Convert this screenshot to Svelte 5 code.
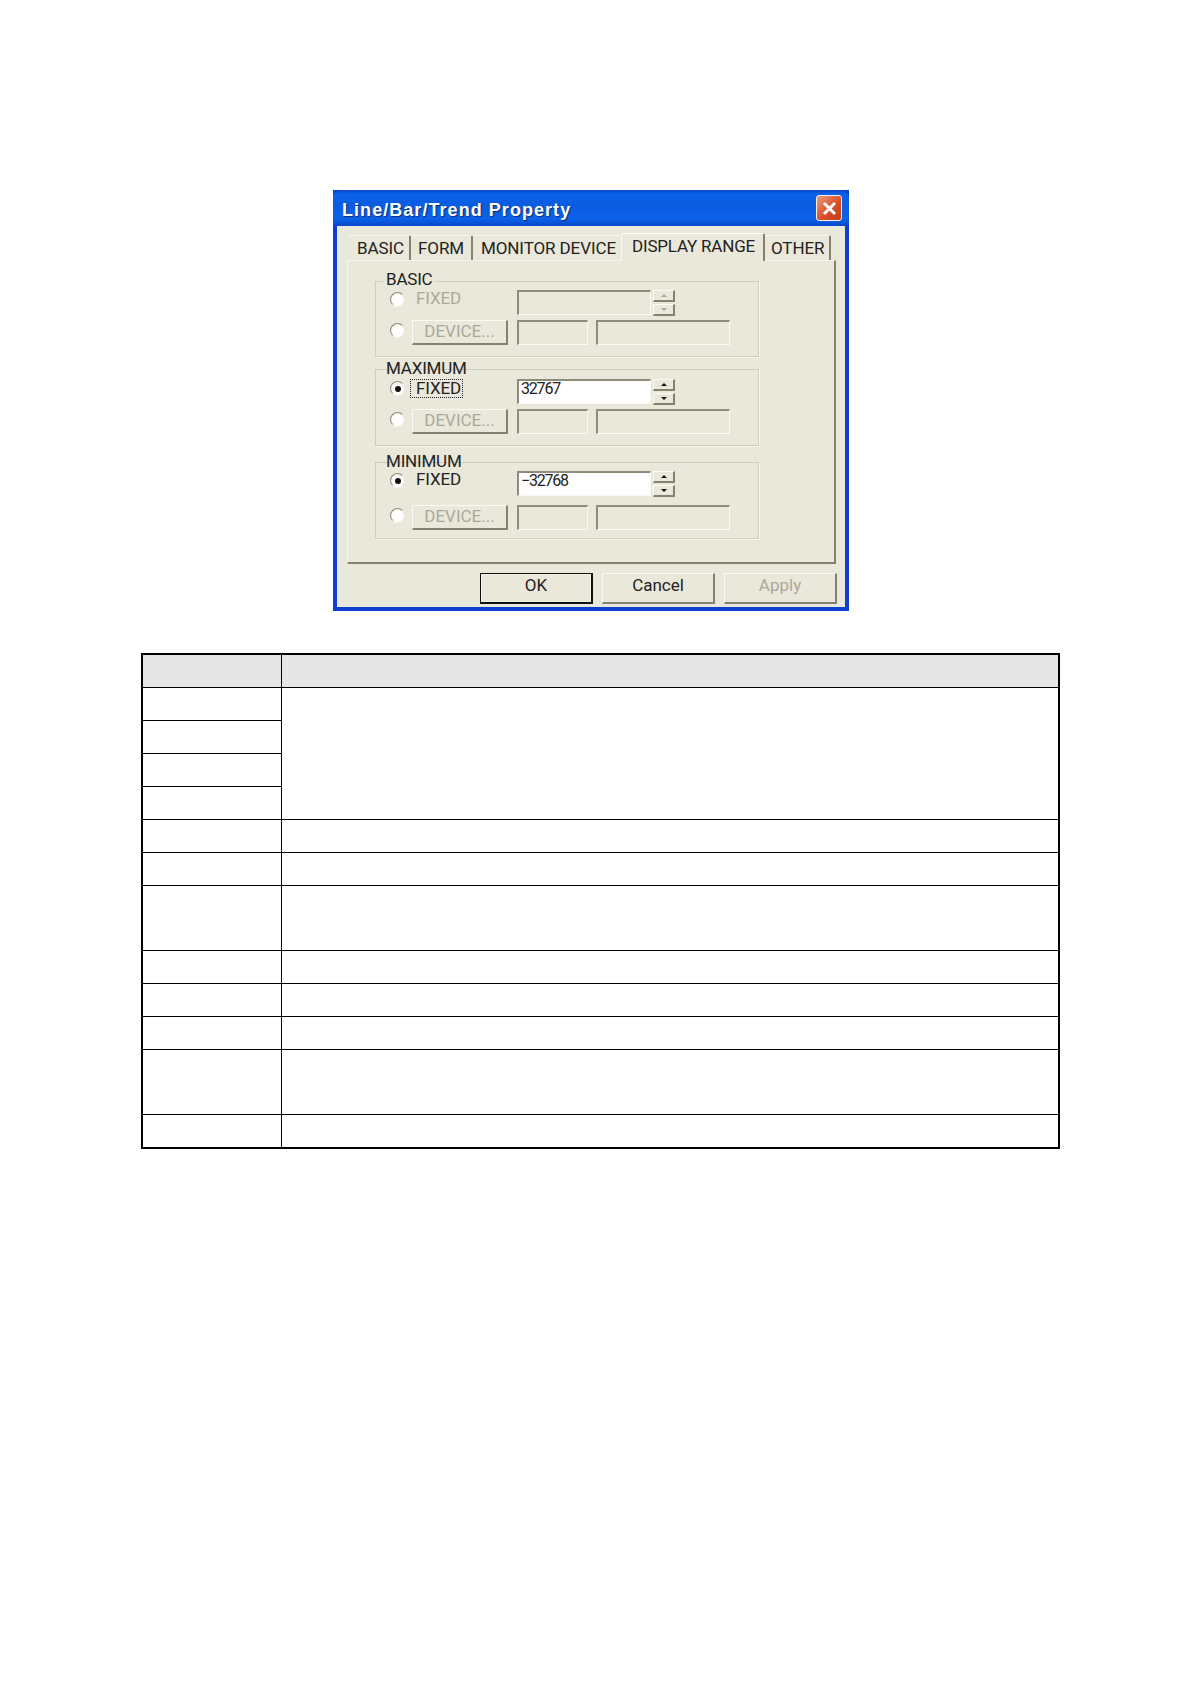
<script>
  const tabs = [
    { label: "BASIC", w: 64, pad: 10 },
    { label: "FORM", w: 62, pad: 7 },
    { label: "MONITOR DEVICE", w: 148, pad: 8, plain: true },
    { label: "DISPLAY RANGE", w: 144, pad: 10, active: true },
    { label: "OTHER", w: 66, pad: 6 }
  ];

  const groups = [
    { title: "BASIC", cls: "g-basic", value: "", off: true },
    { title: "MAXIMUM", cls: "g-max", value: "32767", focus: true },
    { title: "MINIMUM", cls: "g-min", value: "−32768" }
  ];

  // row heights of the (empty) table under the dialog
  const rows = [
    { h: 33, span: 4 }, { h: 33, skip: true }, { h: 33, skip: true }, { h: 33, skip: true },
    { h: 33 }, { h: 33 }, { h: 65 }, { h: 33 }, { h: 33 }, { h: 33 }, { h: 65 }, { h: 33 }
  ];
</script>

<div class="page">
  <div class="dialog">
    <div class="titlebar">
      <span class="title">Line/Bar/Trend Property</span>
      <span class="close">
        <svg width="17" height="17" viewBox="0 0 17 17">
          <path d="M3 3 L14 14 M14 3 L3 14" stroke="#fff" stroke-width="3" fill="none" />
        </svg>
      </span>
    </div>

    <div class="tabs">
      {#each tabs as t}
        <div class="tab" class:active={t.active} class:plain={t.plain} style="width:{t.w}px;padding-left:{t.pad}px">{t.label}</div>
      {/each}
    </div>

    <div class="panel">
      {#each groups as g}
        <div class="group {g.cls}">
          <span class="legend">{g.title}</span>
          <div class="row first">
            <span class="radio" class:off={g.off} class:on={!g.off}></span>
            <div class="fixed-cell">
              <span class="fixed" class:off={g.off} class:focus={g.focus}>FIXED</span>
            </div>
            <input class="field f-main" class:white={!g.off} disabled value={g.value} />
            <div class="spin" class:off={g.off}>
              <span class="sb"><i class="up"></i></span>
              <span class="sb"><i class="down"></i></span>
            </div>
          </div>
          <div class="row second">
            <span class="radio off"></span>
            <button class="btn device" disabled>DEVICE...</button>
            <input class="field f-a" disabled />
            <input class="field f-b" disabled />
          </div>
        </div>
      {/each}
    </div>

    <div class="actions">
      <button class="btn act ok">OK</button>
      <button class="btn act cancel">Cancel</button>
      <button class="btn act apply" disabled>Apply</button>
    </div>
  </div>

  <table class="grid">
    <colgroup>
      <col class="c1" />
      <col />
    </colgroup>
    <thead>
      <tr><th></th><th></th></tr>
    </thead>
    <tbody>
      {#each rows as r}
        <tr style="height:{r.h}px">
          <td></td>
          {#if !r.skip}
            <td rowspan={r.span || 1}></td>
          {/if}
        </tr>
      {/each}
    </tbody>
  </table>
</div>

<style>
  :global(body) {
    margin: 0;
    background: #fff;
  }

  .page {
    min-height: 1684px;
    padding-top: 190px;
    box-sizing: border-box;
    font-family: Roboto, "Liberation Sans", sans-serif;
    font-size: 17px;
    color: #222;
  }

  .dialog {
    width: 516px;
    height: 421px;
    margin-left: 333px;
    box-sizing: border-box;
    background: linear-gradient(#1a1a1a 0 12px, #eae8da 12px);
    border: 4px solid #0a3fd0;
    border-top: 0;
  }

  .titlebar {
    height: 36px;
    margin: 0 -4px;
    padding: 4px 7px 0 9px;
    box-sizing: border-box;
    display: flex;
    align-items: center;
    justify-content: space-between;
    border-radius: 7px 7px 0 0;
    background: linear-gradient(#0a46c4 0, #0a62ea 12%, #0a5ce0 45%, #0c62ea 80%, #0748c8 100%);
  }

  .title {
    color: #fff;
    font-family: "Liberation Sans", sans-serif;
    font-size: 18px;
    font-weight: bold;
    letter-spacing: 1.05px;
    text-shadow: 1px 1px 1px #0a2a80;
  }

  .close {
    width: 26px;
    height: 26px;
    margin-top: -4px;
    display: flex;
    align-items: center;
    justify-content: center;
    box-sizing: border-box;
    border: 1px solid #f4f0ea;
    border-radius: 3px;
    background: linear-gradient(135deg, #ee9c7c, #d8502a 55%, #c23c16);
  }

  .tabs {
    display: flex;
    align-items: flex-end;
    height: 34px;
    margin-left: 10px;
  }

  .tab {
    height: 25px;
    box-sizing: border-box;
    line-height: 24px;
    letter-spacing: -0.1px;
    white-space: nowrap;
    border-top: 1px solid #f6f5ec;
    border-right: 2px solid #85836f;
    border-radius: 2px 2px 0 0;
  }

  .tab.plain {
    border-right: 0;
  }

  .tab.active {
    height: 28px;
    line-height: 25px;
    margin-bottom: -1px;
    letter-spacing: -0.2px;
    background: #eae8da;
    border-top: 1px solid #fff;
    border-left: 1px solid #fbfaf2;
    position: relative;
    z-index: 1;
  }

  .panel {
    width: 489px;
    height: 304px;
    margin-left: 10px;
    padding: 20px 0 0 27px;
    box-sizing: border-box;
    border-top: 1px solid #f6f5ec;
    border-left: 1px solid #f6f5ec;
    border-right: 2px solid #85836f;
    border-bottom: 2px solid #85836f;
  }

  .group {
    position: relative;
    width: 384px;
    box-sizing: border-box;
    border: 1px solid #cfcebd;
    box-shadow: 1px 1px 0 #f8f7ee;
  }

  .g-basic {
    height: 76px;
    padding-top: 8px;
    color: #aca899;
  }

  .g-max {
    height: 77px;
    margin-top: 12px;
    padding-top: 9px;
  }

  .g-min {
    height: 77px;
    margin-top: 16px;
    padding-top: 8px;
  }

  .legend {
    position: absolute;
    left: 7px;
    top: -13px;
    padding: 0 3px;
    line-height: 20px;
    letter-spacing: -0.2px;
    background: linear-gradient(#eae8da, #eae8da) 0 12px / 100% 4px no-repeat;
    color: #222;
    white-space: nowrap;
  }

  .g-max .legend,
  .g-min .legend {
    top: -12px;
  }

  .row {
    display: flex;
    align-items: flex-start;
    padding-left: 14px;
  }

  .row.first {
    height: 26px;
    margin-bottom: 4px;
  }

  .g-min .row.first {
    margin-bottom: 8px;
  }

  .row.second {
    height: 25px;
  }

  .radio {
    width: 15px;
    height: 15px;
    flex: none;
    margin: 2px 7px 0 0;
    box-sizing: border-box;
    position: relative;
    border-radius: 50%;
    background: radial-gradient(circle at 60% 60%, #fff 45%, #ecebdf 100%);
    border: 1.5px solid;
    border-color: #8d8b7a #eae8da #f4f3ea #8d8b7a;
  }

  .row.second .radio {
    margin-top: 3px;
  }

  .radio.on::after {
    content: "";
    position: absolute;
    left: 3.5px;
    top: 3.5px;
    width: 6px;
    height: 6px;
    border-radius: 50%;
    background: #111;
  }

  .fixed-cell {
    width: 95px;
    margin: -2px 10px 0 0;
    flex: none;
  }

  .g-max .fixed-cell {
    margin-top: -1px;
  }

  .fixed {
    display: inline-block;
    margin-left: -2px;
    padding: 0 1px 0 5px;
    line-height: 17px;
    letter-spacing: -0.1px;
    border: 1px dotted transparent;
  }

  .fixed.off {
    color: #aca899;
  }

  .fixed.focus {
    border-color: #222;
  }

  .field {
    height: 25px;
    margin: 0;
    padding: 0 0 7px 2px;
    box-sizing: border-box;
    flex: none;
    font-family: Roboto, sans-serif;
    font-size: 16px;
    letter-spacing: -1.2px;
    color: #222;
    opacity: 1;
    -webkit-text-fill-color: #222;
    background: transparent;
    border: 2px solid;
    border-width: 2px 1px 1px 2px;
    border-color: #8d8b7a #fbfaf2 #fbfaf2 #8d8b7a;
  }

  .field.white {
    background: #fff;
  }

  .f-main {
    width: 134px;
    margin-right: 2px;
  }

  .f-a {
    width: 71px;
    margin-right: 8px;
  }

  .f-b {
    width: 134px;
  }

  .spin {
    width: 22px;
    display: flex;
    flex-direction: column;
    gap: 2px;
  }

  .sb {
    height: 12px;
    display: flex;
    align-items: center;
    justify-content: center;
    border-top: 1px solid #fbfaf2;
    border-left: 1px solid #fbfaf2;
    border-right: 2px solid #85836f;
    border-bottom: 2px solid #85836f;
    box-sizing: border-box;
  }

  .sb i {
    width: 0;
    height: 0;
    border-left: 3px solid transparent;
    border-right: 3px solid transparent;
  }

  .sb .up {
    border-bottom: 3px solid #111;
  }

  .sb .down {
    border-top: 3px solid #111;
  }

  .spin.off .up {
    border-bottom-color: #aca899;
  }

  .spin.off .down {
    border-top-color: #aca899;
  }

  .btn {
    box-sizing: border-box;
    padding: 0 0 3px;
    font: inherit;
    color: #222;
    background: #eae8da;
    border: 1px solid;
    border-width: 1px 2px 2px 1px;
    border-color: #fbfaf2 #85836f #85836f #fbfaf2;
  }

  .btn:disabled {
    color: #aca899;
  }

  .device {
    width: 96px;
    height: 25px;
    margin-right: 9px;
    flex: none;
  }

  .actions {
    display: flex;
    margin: 9px 0 0 143px;
  }

  .act {
    height: 31px;
    padding-bottom: 7px;
  }

  .ok {
    width: 113px;
    margin-right: 9px;
    border: 2px solid #111;
    border-width: 1px 2px 2px 1px;
    box-shadow: inset 0 0 0 1px #f2f1e6;
  }

  .cancel {
    width: 113px;
    margin-right: 9px;
  }

  .apply {
    width: 113px;
  }

  .grid {
    width: 919px;
    margin: 42px 0 0 141px;
    table-layout: fixed;
    border-collapse: collapse;
    border: 2px solid #000;
  }

  .c1 {
    width: 139px;
  }

  th {
    height: 32px;
    padding: 0;
    background: #e6e6e6;
    border: 1px solid #000;
  }

  td {
    padding: 0;
    border: 1px solid #000;
  }
</style>
